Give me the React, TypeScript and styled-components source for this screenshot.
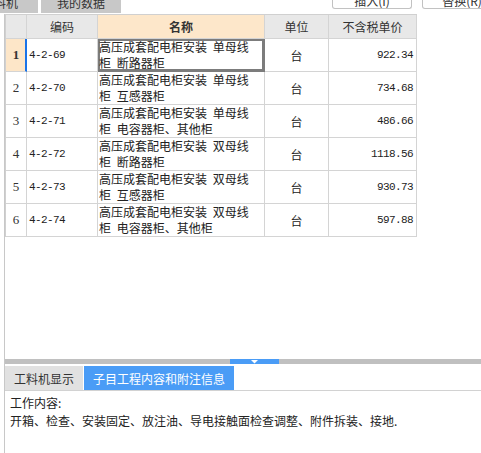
import React from "react";
import styled, { createGlobalStyle, css } from "styled-components";

const Global = createGlobalStyle`
  html, body { margin: 0; padding: 0; background: #ffffff; }
  body { font-family: "Noto Sans CJK SC", "Noto Sans", sans-serif; color: #222; }
`;

const Page = styled.div`
  width: 481px;
  height: 453px;
  overflow: hidden;
  display: flex;
  flex-direction: column;
  background: #fff;
`;

const TopStrip = styled.div`
  height: 14px;
  flex: none;
  display: flex;
  align-items: flex-start;
  overflow: hidden;
`;

const TopTab = styled.div<{ $w: number; $cut?: boolean }>`
  width: ${(p) => p.$w}px;
  height: 13px;
  background: #c8c8c8;
  color: #333;
  font-size: 12px;
  line-height: 5px;
  display: flex;
  justify-content: ${(p) => (p.$cut ? "flex-end" : "center")};
  padding-right: ${(p) => (p.$cut ? 20 : 0)}px;
  box-sizing: border-box;
  overflow: hidden;
  white-space: nowrap;
  margin-right: 3px;
  flex: none;
`;

const Spacer = styled.div`
  flex: 1;
`;

const ButtonRow = styled.div`
  display: flex;
  flex: none;
  margin-right: -21px;
`;

const TopButton = styled.div`
  width: 80px;
  height: 9px;
  flex: none;
  box-sizing: border-box;
  border: 1px solid #c2c2c2;
  border-top: none;
  border-radius: 0 0 3px 3px;
  background: #fff;
  font-size: 12px;
  line-height: 2px;
  color: #333;
  text-align: center;
  overflow: hidden;
  white-space: nowrap;
  margin-left: 10px;
`;

const Main = styled.div`
  flex: 1;
  margin-left: 4px;
  border-left: 1px solid #c8c8c8;
  display: flex;
  flex-direction: column;
  min-height: 0;
`;

const GridPane = styled.div`
  height: 345px;
  flex: none;
`;

const Grid = styled.div`
  display: grid;
  grid-template-columns: 21px 71px 167px 64px 88px;
  grid-auto-rows: 33px;
  grid-template-rows: 24px;
  width: max-content;
  border-top: 1px solid #d0d0d0;
  border-left: 1px solid #d0d0d0;
`;

const cellBase = css`
  box-sizing: border-box;
  border-right: 1px solid #d4d4d4;
  border-bottom: 1px solid #d4d4d4;
  overflow: hidden;
`;

const HeadCell = styled.div<{ $accent?: boolean }>`
  ${cellBase};
  background: ${(p) => (p.$accent ? "#fde7ca" : "#e8e8e8")};
  font-size: 12px;
  font-weight: ${(p) => (p.$accent ? 700 : 400)};
  color: #333;
  display: flex;
  align-items: center;
  justify-content: center;
`;

const NumCell = styled.div<{ $active?: boolean }>`
  ${cellBase};
  background: ${(p) => (p.$active ? "#fde6c8" : "#fff")};
  border-right: ${(p) => (p.$active ? "2px solid #1a73e8" : "1px solid #d4d4d4")};
  font-family: "Liberation Serif", "DejaVu Serif", serif;
  font-size: 13px;
  font-weight: ${(p) => (p.$active ? 700 : 400)};
  color: #333;
  display: flex;
  align-items: center;
  justify-content: center;
  padding-left: ${(p) => (p.$active ? 1 : 0)}px;
`;

const CodeCell = styled.div`
  ${cellBase};
  font-family: "Liberation Mono", "DejaVu Sans Mono", monospace;
  font-size: 11px;
  letter-spacing: -0.6px;
  color: #222;
  display: flex;
  align-items: center;
  padding-left: 2px;
`;

const NameCell = styled.div<{ $selected?: boolean }>`
  ${cellBase};
  font-size: 12px;
  line-height: 16px;
  word-spacing: 3px;
  color: #222;
  padding: 0 8px 0 1px;
  ${(p) =>
    p.$selected &&
    css`
      box-shadow: inset 0 0 0 2px #7c7c7c;
      border-right-color: #7c7c7c;
      border-bottom-color: #7c7c7c;
    `}
`;

const UnitCell = styled.div`
  ${cellBase};
  font-size: 12px;
  color: #222;
  display: flex;
  align-items: center;
  justify-content: center;
`;

const PriceCell = styled.div`
  ${cellBase};
  font-family: "Liberation Mono", "DejaVu Sans Mono", monospace;
  font-size: 11px;
  letter-spacing: -0.6px;
  color: #222;
  display: flex;
  align-items: center;
  justify-content: flex-end;
  padding-right: 3px;
`;

const Splitter = styled.div`
  height: 5px;
  flex: none;
  background: #c0c0c0;
  display: flex;
  justify-content: center;
  padding-left: 22px;
`;

const SplitHandle = styled.div`
  width: 49px;
  height: 5px;
  background: #4a9cf6;
  display: flex;
  justify-content: center;
  align-items: flex-start;
  padding-top: 1px;
  box-sizing: border-box;
`;

const Bottom = styled.div`
  flex: 1;
  display: flex;
  flex-direction: column;
  padding-top: 2px;
`;

const TabBar = styled.div`
  display: flex;
  gap: 1px;
  height: 24px;
  border-bottom: 1px solid #d2d2d2;
`;

const BottomTab = styled.div<{ $active?: boolean }>`
  padding: 0 9px;
  font-size: 12px;
  display: flex;
  align-items: center;
  background: ${(p) => (p.$active ? "#4a9cf6" : "#e1e1e1")};
  color: ${(p) => (p.$active ? "#ffffff" : "#333")};
  white-space: nowrap;
`;

const Content = styled.div`
  padding: 3px 5px 0;
  font-size: 12px;
  line-height: 18px;
  color: #222;
`;

const rows = [
  { code: "4-2-69", name: "高压成套配电柜安装 单母线柜 断路器柜", price: "922.34" },
  { code: "4-2-70", name: "高压成套配电柜安装 单母线柜 互感器柜", price: "734.68" },
  { code: "4-2-71", name: "高压成套配电柜安装 单母线柜 电容器柜、其他柜", price: "486.66" },
  { code: "4-2-72", name: "高压成套配电柜安装 双母线柜 断路器柜", price: "1118.56" },
  { code: "4-2-73", name: "高压成套配电柜安装 双母线柜 互感器柜", price: "930.73" },
  { code: "4-2-74", name: "高压成套配电柜安装 双母线柜 电容器柜、其他柜", price: "597.88" },
];

export default function App() {
  return (
    <Page>
      <Global />
      <TopStrip>
        <TopTab $w={38} $cut>
          工料机
        </TopTab>
        <TopTab $w={80}>我的数据</TopTab>
        <Spacer />
        <ButtonRow>
          <TopButton>插入(I)</TopButton>
          <TopButton>替换(R)</TopButton>
        </ButtonRow>
      </TopStrip>
      <Main>
        <GridPane>
          <Grid>
            <HeadCell />
            <HeadCell>编码</HeadCell>
            <HeadCell $accent>名称</HeadCell>
            <HeadCell>单位</HeadCell>
            <HeadCell>不含税单价</HeadCell>
            {rows.map((r, i) => (
              <React.Fragment key={r.code}>
                <NumCell $active={i === 0}>{i + 1}</NumCell>
                <CodeCell>{r.code}</CodeCell>
                <NameCell $selected={i === 0}>{r.name}</NameCell>
                <UnitCell>台</UnitCell>
                <PriceCell>{r.price}</PriceCell>
              </React.Fragment>
            ))}
          </Grid>
        </GridPane>
        <Splitter>
          <SplitHandle>
            <svg width="7" height="4" viewBox="0 0 7 4">
              <path d="M0 0 H7 L3.5 3.5 Z" fill="#ffffff" />
            </svg>
          </SplitHandle>
        </Splitter>
        <Bottom>
          <TabBar>
            <BottomTab>工料机显示</BottomTab>
            <BottomTab $active>子目工程内容和附注信息</BottomTab>
          </TabBar>
          <Content>
            <div>工作内容:</div>
            <div>开箱、检查、安装固定、放注油、导电接触面检查调整、附件拆装、接地.</div>
          </Content>
        </Bottom>
      </Main>
    </Page>
  );
}
